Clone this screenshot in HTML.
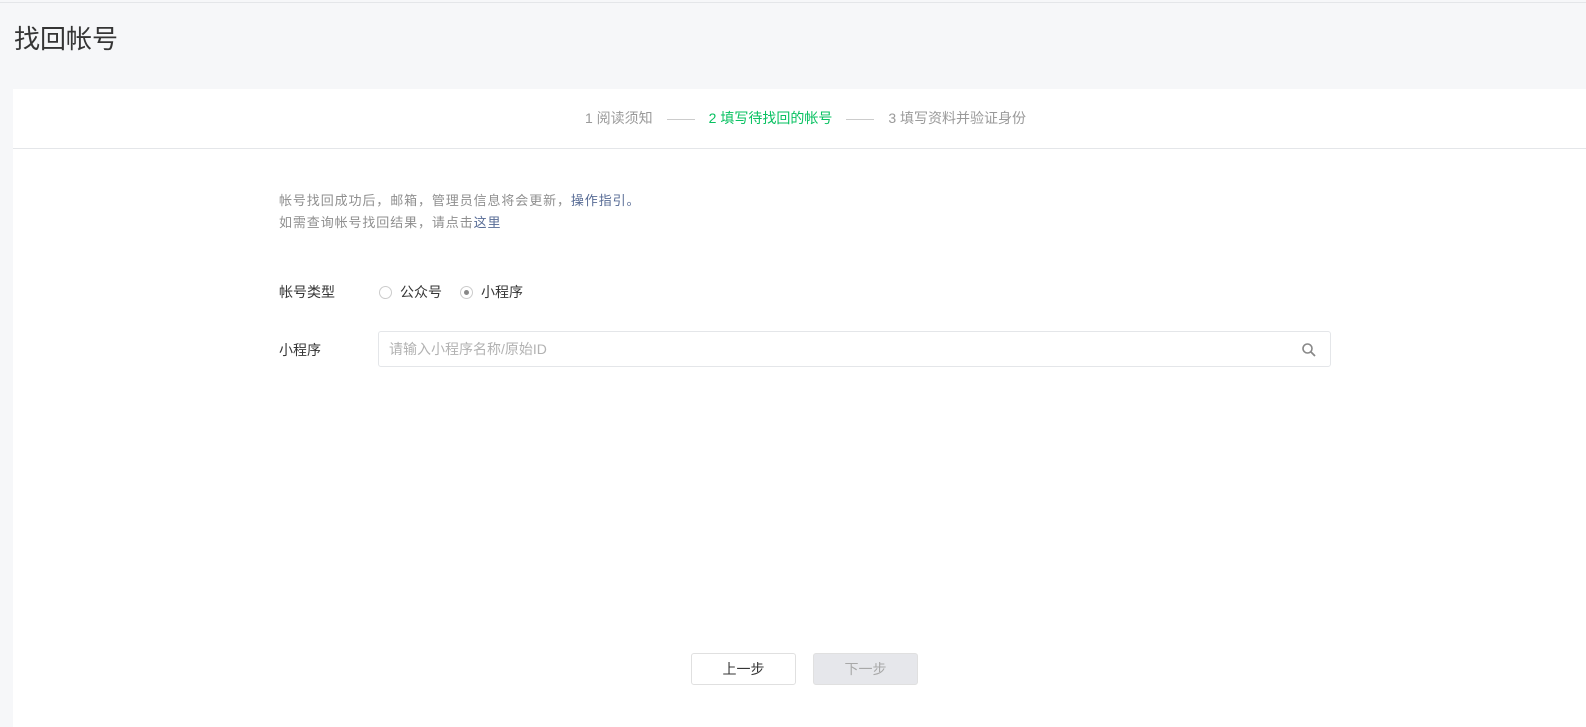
<!DOCTYPE html>
<html><head><meta charset="utf-8"><style>
*{margin:0;padding:0;box-sizing:border-box}
body{width:1586px;height:727px;background:#f6f7f9;font-family:"Liberation Sans","Noto Sans CJK SC",sans-serif;position:relative;overflow:hidden;color:#353535}
.topline{position:absolute;left:0;top:2px;width:1586px;height:1px;background:#e4e6e9}
h1{position:absolute;left:14px;top:19px;font-size:26px;font-weight:normal;color:#353535}
.panel{position:absolute;left:13px;top:89px;width:1573px;height:638px;background:#fff}
.steps{height:60px;border-bottom:1px solid #e4e6e9;font-size:14px;color:#9a9a9a;text-align:center;line-height:58px;padding-left:12px}
.steps .on{color:#07c160}
.steps .dash{display:inline-block;width:28px;height:1px;background:#ccc;vertical-align:middle;margin:0 14px}
.tip{position:absolute;left:266px;top:101px;font-size:13px;line-height:22px;color:#8f8f8f;letter-spacing:0.9px}
.tip a{color:#576b95;text-decoration:none}
.lbl{position:absolute;left:266px;font-size:14px;color:#353535}
.radio{position:absolute;top:193px;font-size:14px}
.radio i{display:inline-block;width:13px;height:13px;border:1px solid #ccc;border-radius:50%;vertical-align:-2px;margin-right:8px;position:relative}
.radio i.c::after{content:"";position:absolute;left:3px;top:3px;width:5px;height:5px;border-radius:50%;background:#888}
.input{position:absolute;left:365px;top:242px;width:953px;height:36px;border:1px solid #e4e6e9;border-radius:3px;font-size:14px;color:#b2b2b2;line-height:34px;padding-left:10px}
.btn{position:absolute;top:564px;width:105px;height:32px;border:1px solid #e0e0e0;border-radius:3px;text-align:center;line-height:30px;font-size:14px;font-weight:normal}
</style></head><body>
<div class="topline"></div>
<h1>找回帐号</h1>
<div class="panel">
<div class="steps">1 阅读须知<span class="dash"></span><span class="on">2 填写待找回的帐号</span><span class="dash"></span>3 填写资料并验证身份</div>
<div class="tip">帐号找回成功后，邮箱，管理员信息将会更新，<a>操作指引。</a><br>如需查询帐号找回结果，请点击<a>这里</a></div>
<div class="lbl" style="top:193px">帐号类型</div>
<div class="radio" style="left:366px"><i></i>公众号</div>
<div class="radio" style="left:447px"><i class="c"></i>小程序</div>
<div class="lbl" style="top:251px">小程序</div>
<div class="input">请输入小程序名称/原始ID
<svg style="position:absolute;right:14px;top:11px" width="14" height="14" viewBox="0 0 14 14"><circle cx="5.5" cy="5.5" r="4.5" fill="none" stroke="#888" stroke-width="1.6"/><path d="M9 9l4 4" stroke="#888" stroke-width="1.8"/></svg></div>
<div class="btn" style="left:678px;background:#fff;color:#353535">上一步</div>
<div class="btn" style="left:800px;background:#e6e7eb;color:#a8a8a8">下一步</div>
</div>
</body></html>
